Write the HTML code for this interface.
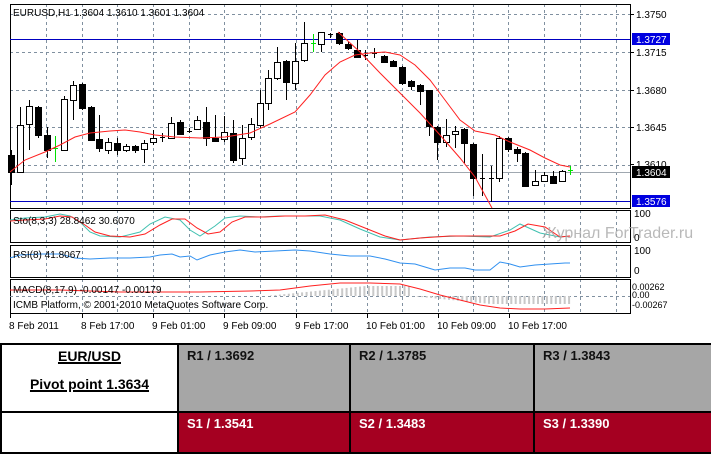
<!DOCTYPE html>
<html><head><meta charset="utf-8"><style>
body{margin:0;width:711px;height:456px;background:#fff;overflow:hidden;position:relative;font-family:"Liberation Sans",sans-serif}
svg{position:absolute;left:0;top:0}
.tb{position:absolute;left:0;top:343px;width:711px;height:111px;border-collapse:collapse;table-layout:fixed}
.tb td{border:2px solid #000;vertical-align:top;font-weight:bold;font-size:13px;padding:3px 0 0 8px;overflow:hidden;white-space:nowrap}
.g{background:#a6a6a6;color:#111}.r{background:#a50021;color:#fff}
.u{text-decoration:underline;text-decoration-thickness:2px}
</style></head><body>
<svg id="s" width="711" height="343" font-family="Liberation Sans, sans-serif"></svg>
<table class="tb">
<colgroup><col style="width:177px"><col style="width:172px"><col style="width:184px"><col style="width:178px"></colgroup>
<tr style="height:68px"><td style="text-align:center;padding:3px 0 0 0"><div class="u" style="font-size:14px;margin-top:0">EUR/USD</div><div class="u" style="font-size:14px;margin-top:12px">Pivot point 1.3634</div></td>
<td class="g">R1 / 1.3692</td><td class="g">R2 / 1.3785</td><td class="g">R3 / 1.3843</td></tr>
<tr><td></td><td class="r">S1 / 1.3541</td><td class="r">S2 / 1.3483</td><td class="r">S3 / 1.3390</td></tr>
</table>
<script>
var s='';
function L(x1,y1,x2,y2,c,w,d){s+='<line x1="'+x1+'" y1="'+y1+'" x2="'+x2+'" y2="'+y2+'" stroke="'+c+'" stroke-width="'+(w||1)+'"'+(d?' stroke-dasharray="'+d+'"':'')+'/>';}
function P(pts,c,w){s+='<polyline fill="none" stroke="'+c+'" stroke-width="'+(w||1)+'" points="'+pts+'"/>';}
function T(x,y,t,sz,c,a){s+='<text x="'+x+'" y="'+y+'" font-size="'+(sz||10)+'" fill="'+(c||'#000')+'"'+(a?' '+a:'')+'>'+t+'</text>';}
var gx=[46,82,117,153,189,224,260,296,331,367,402,438,473,508,544,580,616];
[14,52,90,127,165].forEach(function(y){L(10,y+.5,630,y+.5,'#8090a0',1,'3,3')});
[[10,4,630,208],[10,210,630,242],[10,245,630,277],[10,279,630,313]].forEach(function(r){
 gx.forEach(function(x){L(x+.5,r[1],x+.5,r[3],'#8090a0',1,'3,3')});
 s+='<rect x="'+(r[0]+.5)+'" y="'+(r[1]+.5)+'" width="'+(r[2]-r[0])+'" height="'+(r[3]-r[1])+'" fill="none" stroke="#000"/>';
});
L(10,172.5,630,172.5,'#a0a8b0');
L(10,39.5,630,39.5,'#0000c0');L(10,201.5,630,201.5,'#0000c0');
var c=[[11,'b',155,172,150,185],[20,'w',125,172,107,172],[29,'w',106,124,100,150],[38,'b',107,135,106,138],[47,'b',135,150,127,158],[55,'g',148,148,136,162],[64,'w',99,150,96,150],[73,'w',85,100,81,120],[82,'b',84,108,83,110],[91,'b',107,140,106,140],[99,'b',139,148,115,152],[108,'w',142,150,138,154],[117,'b',143,150,138,155],[126,'w',146,150,144,152],[135,'b',146,150,145,153],[144,'w',143,149,140,163],[153,'w',138,142,130,145],[162,'d',137,137,133,142],[171,'w',123,138,117,138],[180,'b',122,134,120,135],[189,'d',131,131,128,133],[197,'w',120,129,116,130],[206,'b',122,138,107,146],[215,'b',138,141,115,142],[224,'w',132,139,116,142],[233,'b',133,160,120,163],[242,'w',138,158,125,165],[251,'w',124,137,118,140],[260,'w',103,125,90,128],[268,'w',78,103,70,110],[277,'w',62,78,47,80],[286,'b',61,82,60,100],[295,'w',61,83,43,90],[304,'w',43,60,22,62],[313,'g',43,43,34,52],[321,'w',32,44,32,52],[330,'d',34,34,33,38],[339,'b',33,43,32,45],[348,'b',44,48,42,50],[357,'b',50,57,40,58],[365,'d',55,55,50,60],[374,'d',53,53,48,58],[384,'b',56,62,55,63],[393,'b',61,66,60,67],[402,'b',67,83,66,85],[411,'b',81,86,80,90],[420,'b',85,91,84,105],[429,'b',90,126,90,136],[437,'b',127,142,126,160],[446,'w',135,142,119,147],[455,'w',131,134,126,148],[464,'b',129,143,128,163],[473,'b',144,178,143,196],[482,'d',178,178,154,196],[491,'d',178,178,166,202],[499,'w',138,178,136,182],[508,'b',138,149,137,152],[517,'b',149,153,147,162],[525,'b',153,186,152,187],[535,'w',181,185,170,186],[544,'w',175,181,172,182],[553,'b',176,183,171,184],[562,'w',171,181,170,182],[570,'g',170,170,166,175]];
c.forEach(function(k){var x=k[0]+.5;var col=k[1]=='g'?'#00e000':'#000';L(x,k[4],x,k[5],col);
 if(k[1]=='w'||k[1]=='b')s+='<rect x="'+(k[0]-2.5)+'" y="'+(k[2]+.5)+'" width="6" height="'+Math.max(1,k[3]-k[2])+'" fill="'+(k[1]=='w'?'#fff':'#000')+'" stroke="#000"/>';
 else L(k[0]-2,k[2]+.5,k[0]+3,k[2]+.5,col);});
P('10,172 25,160 45,152 60,145 75,137 90,133 110,131 125,130 140,132 155,135 175,137 200,138 225,137 250,133 270,124 295,112 310,95 325,75 340,62 355,55 370,53 385,52 400,55 415,65 430,80 445,100 460,120 475,131 495,135 510,142 530,150 545,158 560,165 570,167','#ff2020');
P('338,32 360,52 380,73 400,93 420,113 440,135 460,158 475,177 492,208','#ff2020');
[[14,'1.3750'],[52,'1.3715'],[90,'1.3680'],[127,'1.3645'],[164,'1.3610']].forEach(function(a){L(630,a[0]+.5,634,a[0]+.5,'#000');T(636,a[0]+4,a[1])});
s+='<rect x="632" y="33" width="38" height="12" fill="#0000e0"/>';T(636,43,'1.3727',10,'#fff');
s+='<rect x="632" y="166" width="38" height="12" fill="#000"/>';T(636,176,'1.3604',10,'#fff');
s+='<rect x="632" y="195" width="38" height="12" fill="#0000e0"/>';T(636,205,'1.3576',10,'#fff');
T(13,16,'EURUSD,H1  1.3604 1.3610 1.3601 1.3604');
P('10,220 25,218 45,217 60,214 70,216 80,222 90,232 100,236 120,237 140,232 150,224 165,217 180,220 190,230 200,236 215,226 225,218 240,216 260,217 280,216 300,216 320,216 340,220 360,229 380,237 400,240 430,237 460,236 490,237 510,230 520,224 540,233 560,237 570,236','#40c0b0');
P('10,221 25,220 45,219 60,216 72,217 85,225 95,232 110,236 130,237 145,234 160,225 172,219 185,219 197,228 208,234 220,232 232,222 245,217 265,217 285,216 305,216 325,215 345,220 365,228 385,236 400,240 420,238 450,236 480,236 500,236 515,231 528,224 545,227 560,237 570,236','#ff2020');
T(13,224,'Sto(8,3,3) 28.8462 30.6070');
T(634,217,'100');T(634,241,'0');
T(542,238,'Журнал ForTrader.ru',16,'#a8a8a8','font-family="Liberation Sans, DejaVu Sans, sans-serif" opacity="0.8"');
P('10,258 20,255 40,254 60,254 75,258 90,259 110,258 130,258 150,257 160,255 172,254 180,257 190,256 197,260 210,255 225,252 240,250 255,252 275,251 295,250 310,251 330,254 350,256 370,256 385,259 400,263 415,264 425,267 435,270 450,268 465,268 475,270 490,270 500,262 510,264 520,267 535,265 550,264 565,263 570,263','#3090f0');
T(13,258,'RSI(8) 41.8067');
T(634,254,'100');T(634,274,'0');
L(10,296.5,630,296.5,'#8090a0',1,'3,3');
for(var x=270;x<=570;x+=4.45){var y=x<410?Math.max(286,296-(x-265)*0.1):296+Math.min(8,(x-410)*0.1);s+='<rect x="'+x.toFixed(1)+'" y="'+Math.min(y,296)+'" width="2" height="'+Math.abs(y-296)+'" fill="#c8c8c8"/>';}
P('10,290 60,290 120,292 200,292 250,291 280,290 310,286 340,283 370,283 400,284 420,289 440,295 460,300 480,305 500,308 520,309 545,309 570,308','#ff2020');
T(13,293,'MACD(8,17,9) -0.00147 -0.00179');
T(13,308,'ICMB Platform, © 2001-2010 MetaQuotes Software Corp.');
T(632,290,'0.00262',9);T(632,298,'0.00',9);T(632,308,'-0.00267',9);
[[9,'8 Feb 2011'],[81,'8 Feb 17:00'],[152,'9 Feb 01:00'],[223,'9 Feb 09:00'],[295,'9 Feb 17:00'],[366,'10 Feb 01:00'],[437,'10 Feb 09:00'],[508,'10 Feb 17:00']].forEach(function(d){L(d[0]+1.5,313,d[0]+1.5,318,'#000');T(d[0],329,d[1]);});
document.getElementById('s').innerHTML=s;
</script>
</body></html>
